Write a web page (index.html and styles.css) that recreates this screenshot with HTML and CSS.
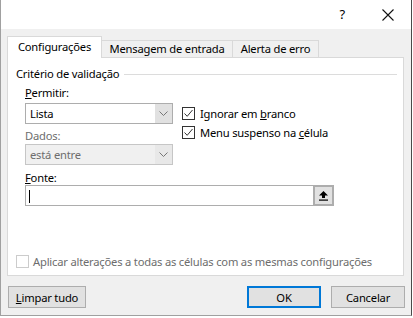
FILE: index.html
```html
<!DOCTYPE html>
<html lang="pt">
<head>
    <meta charset="UTF-8">
    <title>Validação de dados</title>
    <link rel="stylesheet" href="styles.css">
</head>
<body>
    <div class="dialog">
        <div class="titlebar">
            <span class="help">?</span>
            <svg class="close" width="12" height="12" viewBox="0 0 12 12">
                <path d="M0.5 0.5 L11.5 11.5 M11.5 0.5 L0.5 11.5" stroke="#111" stroke-width="1.1" fill="none"/>
            </svg>
        </div>
        <div class="body">
            <div class="tabs">
                <div class="tab active">Configurações</div>
                <div class="tab tab-msg">Mensagem de entrada</div>
                <div class="tab tab-err">Alerta de erro</div>
            </div>
            <div class="panel">
                <div class="group-title"><span>Critério de validação</span><div class="rule"></div></div>
                <div class="criteria">
                    <div class="left-col">
                        <div class="label first"><u>P</u>ermitir:</div>
                        <div class="combo">
                            <span class="combo-text">Lista</span>
                            <span class="combo-btn"><svg width="9" height="5" viewBox="0 0 9 5"><path d="M0.5 0.5 L4.5 4.5 L8.5 0.5" stroke="#777" fill="none"/></svg></span>
                        </div>
                        <div class="label disabled">Dados:</div>
                        <div class="combo off">
                            <span class="combo-text">está entre</span>
                            <span class="combo-btn"><svg width="9" height="5" viewBox="0 0 9 5"><path d="M0.5 0.5 L4.5 4.5 L8.5 0.5" stroke="#777" fill="none"/></svg></span>
                        </div>
                    </div>
                    <div class="right-col">
                        <div class="check-row"><span class="box"><svg width="11" height="11" viewBox="0 0 11 11"><path d="M1.5 5.5 L4.2 8.3 L9.5 2" stroke="#333" stroke-width="1" fill="none"/></svg></span><span>Ignorar em <u>b</u>ranco</span></div>
                        <div class="check-row"><span class="box"><svg width="11" height="11" viewBox="0 0 11 11"><path d="M1.5 5.5 L4.2 8.3 L9.5 2" stroke="#333" stroke-width="1" fill="none"/></svg></span><span>Menu suspenso na <u>c</u>élula</span></div>
                    </div>
                </div>
                <div class="label source-label"><u>F</u>onte:</div>
                <div class="source">
                    <div class="source-input"><span class="caret"></span></div>
                    <div class="source-btn"><svg width="11" height="11" viewBox="0 0 11 11"><path d="M5.5 1 L10 5.5 L7 5.5 L7 8 L4 8 L4 5.5 L1 5.5 Z" fill="#000"/><rect x="1" y="9.5" width="9" height="1.2" fill="#000"/></svg></div>
                </div>
                <div class="apply"><span class="box"></span><span>Aplicar alterações a todas as células com as mesmas configurações</span></div>
            </div>
            <div class="buttons">
                <button class="btn"><u>L</u>impar tudo</button>
                <div class="spacer"></div>
                <button class="btn default">OK</button>
                <button class="btn">Cancelar</button>
            </div>
        </div>
    </div>
</body>
</html>
```

FILE: styles.css
```css
body {
    margin: 0;
    background: #fff;
    font-family: 'Noto Sans', 'Liberation Sans', sans-serif;
    font-size: 11.2px;
    letter-spacing: -0.2px;
    color: #000;
    width: 413px;
    height: 318px;
    overflow: hidden;
}

.dialog {
    width: 410px;
    height: 315px;
    border-left: 1px solid #a0a0a0;
    border-right: 1px solid #4a4a4a;
    border-bottom: 1px solid #a0a0a0;
    display: flex;
    flex-direction: column;
}

.titlebar {
    height: 29px;
    background: #fff;
    display: flex;
    align-items: center;
    justify-content: flex-end;
    padding-right: 17px;
}

.help {
    font-size: 13px;
    margin-right: 37px;
    margin-top: -2px;
}

.body {
    flex: 1;
    background: #f0f0f0;
    padding: 7px 6px 0 6px;
}

/* tabs */
.tabs {
    display: flex;
    align-items: flex-end;
    height: 21px;
    position: relative;
    z-index: 1;
}

.tab {
    flex: none;
    height: 17px;
    line-height: 16px;
    text-align: center;
    border: 1px solid #d9d9d9;
    border-bottom: none;
    border-left: none;
    box-sizing: border-box;
}

.tab.active {
    height: 22px;
    margin-bottom: -1px;
    line-height: 20px;
    background: #fff;
    border-left: 1px solid #d9d9d9;
    width: 95px;
}

.tab-msg {
    width: 131px;
}

.tab-err {
    width: 86px;
}

.panel {
    height: 219px;
    box-sizing: border-box;
    background: #fff;
    border: 1px solid #d9d9d9;
    margin-right: 1px;
    padding: 7px 6px 0 8px;
}

.group-title {
    display: flex;
    align-items: center;
    height: 16px;
}

.rule {
    flex: 1;
    height: 1px;
    background: #dcdcdc;
    margin-left: 5px;
    margin-top: 2px;
}

.criteria {
    display: flex;
    padding-left: 9px;
    margin-top: 4px;
}

.left-col {
    width: 148px;
}

.label {
    height: 16px;
    line-height: 16px;
}

.label.first {
    margin-bottom: 2px;
}

.label.disabled {
    color: #6d6d6d;
    margin-top: 4px;
}

.combo {
    height: 21px;
    box-sizing: border-box;
    border: 1px solid #adadad;
    display: flex;
    background: #fff;
}

.combo-text {
    flex: 1;
    padding-left: 4px;
    line-height: 19px;
}

.combo-btn {
    width: 17px;
    background: #e1e1e1;
    display: flex;
    align-items: center;
    justify-content: center;
}

.combo.off {
    background: #f0f0f0;
    border-color: #c6c6c6;
    color: #6d6d6d;
}

.combo.off .combo-btn {
    background: #e8e8e8;
}

.right-col {
    margin-left: 9px;
    padding-top: 19px;
}

.check-row {
    display: flex;
    align-items: center;
    height: 19px;
}

.box {
    width: 13px;
    height: 13px;
    box-sizing: border-box;
    border: 1px solid #333;
    background: #fff;
    margin-right: 5px;
    display: flex;
    align-items: center;
    justify-content: center;
}

.source-label {
    margin-left: 9px;
    margin-top: 5px;
}

.source {
    display: flex;
    margin-left: 9px;
    margin-top: -1px;
    width: 309px;
    height: 21px;
}

.source-input {
    flex: 1;
    border: 1px solid #adadad;
    border-right: none;
    position: relative;
}

.caret {
    position: absolute;
    left: 3px;
    top: 4px;
    width: 1px;
    height: 13px;
    background: #000;
}

.source-btn {
    width: 21px;
    box-sizing: border-box;
    border: 2px solid #adadad;
    background: #e1e1e1;
    display: flex;
    align-items: center;
    justify-content: center;
}

.apply {
    display: flex;
    align-items: center;
    height: 16px;
    margin-top: 47px;
    color: #6d6d6d;
    white-space: nowrap;
}

.apply .box {
    border-color: #cccccc;
    margin-right: 4px;
}

.buttons {
    display: flex;
    margin-top: 10px;
    padding-left: 1px;
}

.spacer {
    flex: 1;
}

.btn {
    font: inherit;
    letter-spacing: inherit;
    color: #000;
    height: 22px;
    width: 78px;
    background: #e1e1e1;
    border: 1px solid #adadad;
    padding: 0;
    margin: 0;
}

.btn.default {
    width: 74px;
    border: 2px solid #0078d7;
    margin-right: 10px;
}

.btn:last-child {
    width: 74px;
}
```
